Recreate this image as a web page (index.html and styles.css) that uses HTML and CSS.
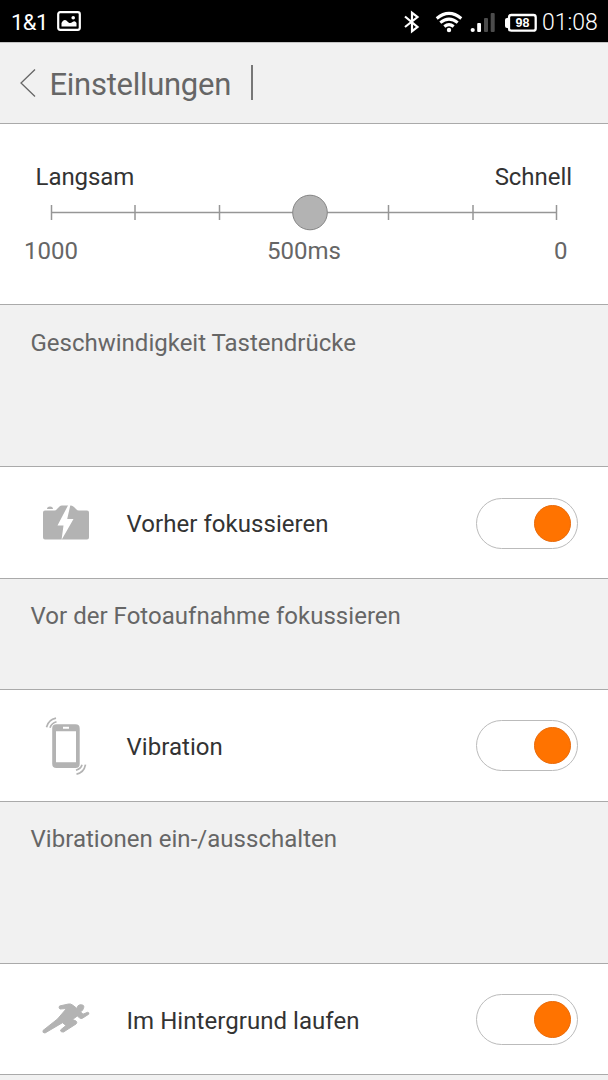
FILE: index.html
```html
<!DOCTYPE html>
<html lang="de">
<head>
<meta charset="utf-8">
<title>Einstellungen</title>
<link rel="stylesheet" href="styles.css">
</head>
<body>
<div class="status">
  <span class="carrier">1&amp;1</span>
  <svg class="picture" width="26" height="22" viewBox="0 0 26 22"><rect x="1.200" y="2.200" width="21.600" height="17.600" rx="2" fill="none" stroke="#fff" stroke-width="2.2"/><path d="M4.500 16.500V13C6 10 8 9 10 11C12 13.500 13.500 13.700 15.500 12C17.500 10.500 18.500 11.500 19.500 13V16.500Z" fill="#fff"/><circle cx="16.200" cy="7.700" r="1.800" fill="#fff"/></svg>
  <div class="tray">
    <svg width="195" height="42" viewBox="0 0 195 42">
      <path d="M5 16.500L17.500 27L12 31.200V12.800L17.500 17L5 27" fill="none" stroke="#fff" stroke-width="2.200"/>
      <g fill="none" stroke="#fff" stroke-width="3"><path d="M36.700 18.500Q49 8.300 61.300 18.500"/><path d="M40.300 22.700Q49 15.500 57.700 22.700"/><path d="M44.300 26.500Q49 22.700 53.700 26.500"/></g>
      <circle cx="49" cy="30" r="2.200" fill="#fff"/>
      <circle cx="72.700" cy="30" r="2.100" fill="#fff"/><rect x="77.200" y="23" width="3.800" height="9" rx="1" fill="#fff"/><rect x="84" y="18" width="4" height="14" rx="1" fill="#4c4c4c"/><rect x="90.700" y="13" width="4" height="19" rx="1" fill="#4c4c4c"/>
      <rect x="109" y="15" width="26.700" height="15.700" rx="2.300" fill="none" stroke="#fff" stroke-width="2.300"/><path d="M109 18H107Q105 18 105 20V26Q105 28 107 28H109Z" fill="#fff"/>
      <text class="charge" x="122.500" y="27" text-anchor="middle">98</text>
    </svg>
  </div>
  <span class="clock">01:08</span>
</div>
<header class="header">
  <svg class="back" width="18" height="30" viewBox="0 0 18 30"><path d="M16 1.500L2 15L16 28.500" fill="none" stroke="#666" stroke-width="1.300"/></svg>
  <h1 class="title">Einstellungen</h1>
  <span class="divider"></span>
</header>
<main>
  <section class="speed">
    <div class="ends"><span class="slow">Langsam</span><span class="fast">Schnell</span></div>
    <svg class="slider" width="608" height="38" viewBox="0 0 608 38">
      <path d="M51 18.500H557" stroke="#969696" stroke-width="1.700"/>
      <path d="M51.500 11V26M135 11V26M219.500 11V26M388.500 11V26M473 11V26M556.500 11V26" stroke="#969696" stroke-width="1.500"/>
      <circle cx="310" cy="18.500" r="17.300" fill="#b3b3b3" stroke="#858585" stroke-width="1"/>
    </svg>
    <div class="values"><span>1000</span><span class="current">500ms</span><span>0</span></div>
  </section>
  <p class="note tall speed-note"><span>Geschwindigkeit Tastendrücke</span></p>
  <section class="row">
    <svg class="icon" width="80" height="70" viewBox="0 0 80 70"><g transform="translate(0 1.500)"><path fill="#b3b3b3" d="M13 23Q13 21 15 21H24.500Q26 21 27 19.500L29.500 17Q30.500 16 32 16H41Q42.500 16 44 17.500L46 19.500Q47.200 21 49 21H57Q59 21 59 23V48Q59 50 57 50H15Q13 50 13 48ZM17 19.500Q17 17 20 17Q23 17 23 19.500Z"/><path fill="#fff" d="M38.500 15L27.500 36H33.500L31.500 50.500L43.500 29.500H37.200L40.500 15Z"/></g></svg>
    <span class="label l1">Vorher fokussieren</span><span class="switch"></span>
  </section>
  <p class="note short focus-note"><span>Vor der Fotoaufnahme fokussieren</span></p>
  <section class="row">
    <svg class="icon" width="80" height="80" viewBox="0 0 80 80"><g transform="translate(0 -.8)"><path fill="#b3b3b3" fill-rule="evenodd" d="M26.500 19H45.500Q49.700 19 49.700 23.200V58.500Q49.700 62.800 45.500 62.800H26.500Q22.200 62.800 22.200 58.500V23.200Q22.200 19 26.500 19ZM26 26V57H46V26ZM33 21.500V23.500H39V21.500Z"/><g fill="none" stroke="#b3b3b3" stroke-width="1.700"><path d="M16.500 22Q18.500 14.500 26 13M20 22.500Q21.500 18 26.500 16.500M46 65Q51 63.500 52 59.500M46.500 69Q54 67.500 55.500 59.500"/></g></g></svg>
    <span class="label l2">Vibration</span><span class="switch"></span>
  </section>
  <p class="note tall vibration-note"><span>Vibrationen ein-/ausschalten</span></p>
  <section class="row last">
    <svg class="icon" width="80" height="60" viewBox="0 0 80 60"><g transform="translate(0 .5)"><path fill="#b3b3b3" stroke="#b3b3b3" stroke-width="1" stroke-linejoin="round" d="M29.500 16.500L38.500 14.500Q40.500 14 42.500 15.500L47 19Q47.500 15.500 50 15.300Q54.500 15 53.700 18Q53 21.500 50.500 22.300L53 24.700L57.500 22.800Q59.500 23 58.700 24.700L52.500 28.700Q51 29.500 49.500 28.300L47.300 26.500L42.500 30L46 31.500Q47.500 33 46 34.500L33.500 42.500Q30.500 43 30.500 40.500L36 36L32.500 33.200L15 43.500Q12.300 43.500 13 41L27.500 29.500L36.500 19L30 19.500Q28.500 18.500 29.500 16.500Z"/></g></svg>
    <span class="label l3">Im Hintergrund laufen</span><span class="switch"></span>
  </section>
</main>
</body>
</html>
```
FILE: styles.css
```css
*, *::after { box-sizing: border-box; }
body { margin: 0; height: 1080px; overflow: hidden; background: #f1f1f1; font: 24px/28px Roboto, sans-serif; color: #333; }
svg { display: block; flex: none; }
span { white-space: nowrap; }
.status { display: flex; height: 42px; background: #000; color: #fff; padding-left: 11px; font-size: 23px; line-height: 45px; }
.carrier { width: 46px; font-size: 22px; letter-spacing: -.5px; }
.picture { margin-top: 10px; }
.tray { margin-left: 317px; width: 142px; }
.charge { font: bold 12.5px "Liberation Sans", sans-serif; fill: #fff; }
.clock { font-weight: 300; }
.header { display: flex; height: 82px; border-top: 1px solid #c4c4c4; border-bottom: 1px solid #aaa; padding: 0 19px; }
.back { margin-top: 25px; }
.title { margin: 23px 0 0 12.5px; width: 201.5px; font-size: 31px; line-height: 37px; font-weight: 400; letter-spacing: -.28px; color: #666; }
.divider { width: 2px; height: 35px; background: #777; margin-top: 22px; }
.speed { height: 181px; padding-top: 39px; background: #fff; border-bottom: 1px solid #aaa; }
.ends { display: flex; justify-content: space-between; padding: 0 36px 0 35.5px; letter-spacing: -.05px; }
.slider { margin-top: 3px; }
.values { display: grid; grid-template-columns: 243px 287px 1fr; padding-left: 24px; margin-top: 5px; color: #666; }
.note { margin: 0; padding: 24px 30.5px; border-bottom: 1px solid #aaa; color: #666; }
.focus-note, .vibration-note { padding-top: 23px; letter-spacing: .03px; }
.tall { height: 162px; }
.short { height: 111px; }
.row { display: flex; align-items: center; height: 112px; padding: 0 30px; background: #fff; border-bottom: 1px solid #aaa; }
.row:not(.last) .icon { margin-top: 1px; }
.last { height: 111px; }
.label { margin-left: 16.5px; padding-top: 3px; letter-spacing: .05px; }
.switch { display: flex; align-items: center; justify-content: flex-end; width: 102px; height: 51px; margin-left: auto; padding-right: 6px; border: 1px solid #bbb; border-radius: 26px; }
.l1 + .switch { margin-top: 1px; }
.switch::after { content: ""; width: 37px; height: 37px; border: 1px solid #e96b0b; border-radius: 50%; background: #ff7300; }
```
